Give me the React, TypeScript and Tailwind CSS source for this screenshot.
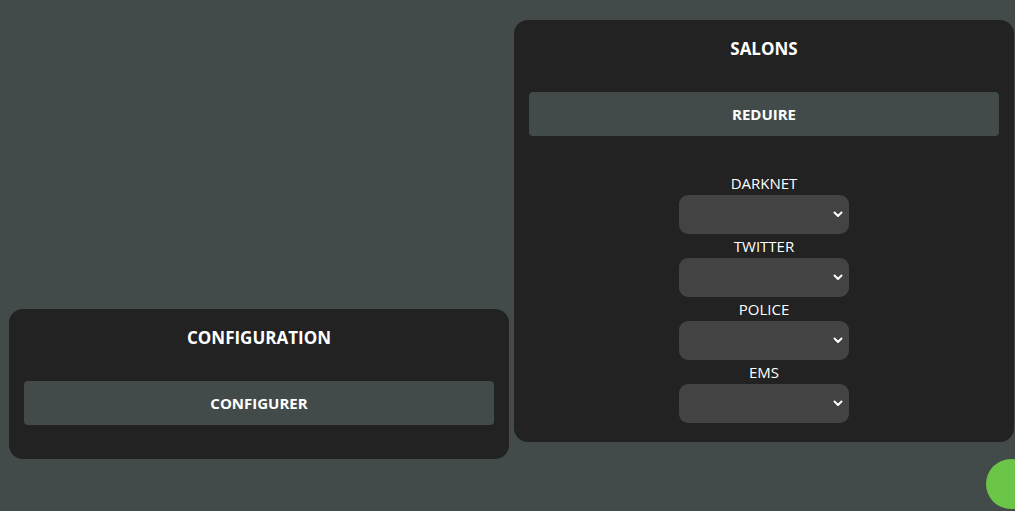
import React from 'react'

const salons = ['DARKNET', 'TWITTER', 'POLICE', 'EMS']

function Chevron() {
  return (
    <svg width="10" height="7" viewBox="0 0 10 7" fill="none" aria-hidden="true">
      <path d="M1.5 1.5 L5 5 L8.5 1.5" stroke="#ffffff" strokeWidth="2" strokeLinecap="round" strokeLinejoin="round" />
    </svg>
  )
}

function Panel({ title, children }: { title: string; children: React.ReactNode }) {
  return (
    <div className="w-[500px] rounded-[14px] bg-[#222222] px-[15px]">
      <h2 className="h-[56px] pt-[17px] text-center text-[17px] leading-[24px] font-bold text-white">{title}</h2>
      {children}
    </div>
  )
}

export default function App() {
  return (
    <div
      className="relative h-[511px] w-[1015px] overflow-hidden bg-[#434b4a] text-white"
      style={{ fontFamily: '"Open Sans", "Noto Sans", sans-serif' }}
    >
      <div className="flex items-start gap-[5px] pl-[9px]">
        <div className="mt-[309px]">
          <Panel title="CONFIGURATION">
            <button className="mt-[16px] mb-[34px] h-[44px] w-full rounded-[4px] bg-[#434b4a] text-[15px] font-bold text-white">
              CONFIGURER
            </button>
          </Panel>
        </div>
        <div className="mt-[20px]">
          <Panel title="SALONS">
            <button className="mt-[16px] h-[44px] w-full rounded-[4px] bg-[#434b4a] text-[15px] font-bold text-white">
              REDUIRE
            </button>
            <div className="flex flex-col items-center pt-[35px] pb-[19px]">
              {salons.map((s) => (
                <div key={s} className="flex flex-col items-center">
                  <label className="h-[24px] text-[15px] leading-[24px] text-white">{s}</label>
                  <div className="flex h-[39px] w-[170px] items-center justify-end rounded-[9px] bg-[#434343] pr-[6px]">
                    <Chevron />
                  </div>
                </div>
              ))}
            </div>
          </Panel>
        </div>
      </div>
      <div className="absolute top-[459px] left-[986px] h-[50px] w-[50px] rounded-full bg-[#6bc547]" />
    </div>
  )
}
